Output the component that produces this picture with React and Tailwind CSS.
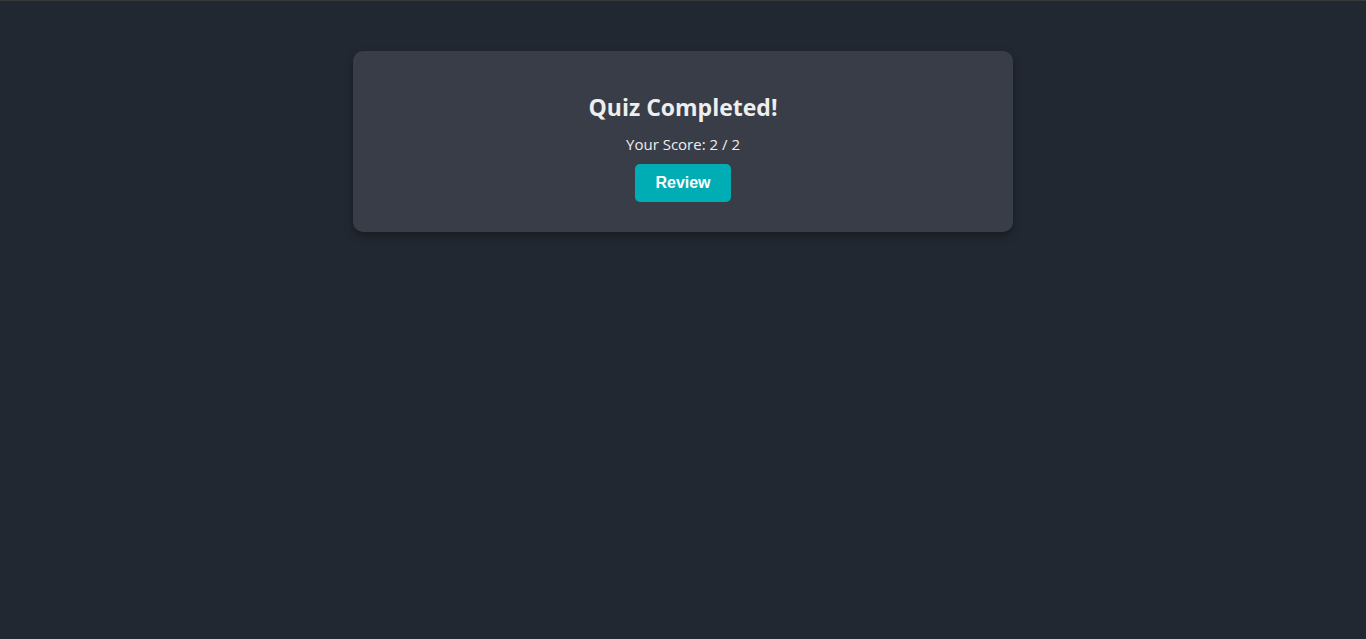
import React from 'react'

function QuizResult({ score, total }) {
    return (
        <div className="w-[660px] mx-auto mt-[50px] bg-[#393d47] rounded-[10px] shadow-[0_4px_10px_rgba(0,0,0,0.3)] pt-[42px] pb-[30px] flex flex-col items-center">
            <h2 className="text-[23px] leading-[29px] font-bold text-[#eeeeee]" style={{ fontFamily: '"Open Sans", "Noto Sans", sans-serif' }}>Quiz Completed!</h2>
            <p className="mt-[12px] text-[15px] leading-[20px] text-[#eeeeee]" style={{ fontFamily: '"Open Sans", "Noto Sans", sans-serif' }}>Your Score: {score} / {total}</p>
            <button className="mt-[10px] w-[96px] h-[38px] bg-[#00adb5] rounded-[5px] text-white font-bold text-[16px] font-['Liberation_Sans',Arial,sans-serif]">Review</button>
        </div>
    )
}

export default function App() {
    return (
        <div className="min-h-screen bg-[#222831] border-t border-[#3a3a3a]">
            <QuizResult score={2} total={2} />
        </div>
    )
}
